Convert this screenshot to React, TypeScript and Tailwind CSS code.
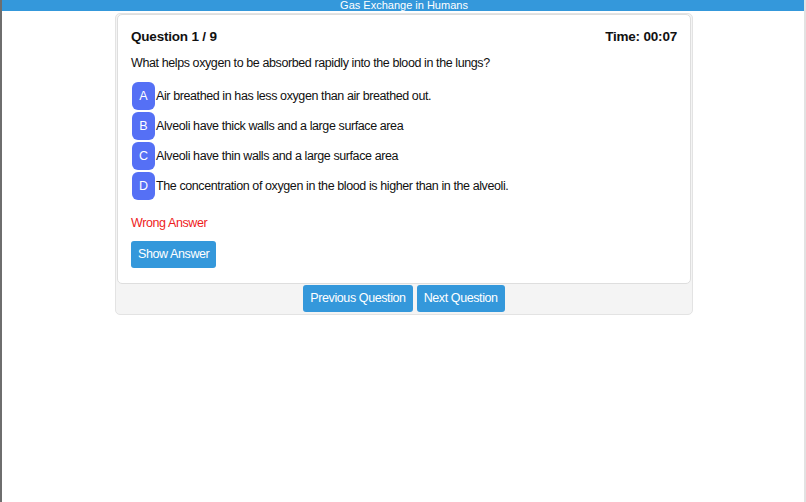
import { useState } from "react"

const options = [
  { key: "A", text: "Air breathed in has less oxygen than air breathed out." },
  { key: "B", text: "Alveoli have thick walls and a large surface area" },
  { key: "C", text: "Alveoli have thin walls and a large surface area" },
  { key: "D", text: "The concentration of oxygen in the blood is higher than in the alveoli." },
]

export default function App() {
  const [picked, setPicked] = useState<string | null>("A")

  return (
    <div
      className="min-h-screen bg-white border-l-2 border-l-[#6e6e6e] border-r-2 border-r-[#e2e2e2] text-[#111]"
      style={{ fontFamily: '"Liberation Sans", Arial, sans-serif' }}
    >
      {/* title bar */}
      <div className="h-[11px] bg-[#3498db] flex justify-center">
        <span className="text-white text-[11px] leading-[10px] pl-[2px]">Gas Exchange in Humans</span>
      </div>

      <div className="ml-[113px] mr-[111px] mt-[2px] bg-[#f4f4f4] border border-[#e3e3e3] rounded-[5px] px-px pb-px">
        {/* question card */}
        <div className="bg-white border border-[#dedede] rounded-[5px] px-[13px] pt-[13px] pb-[15px]">
          <div className="flex justify-between items-center text-[13.5px] tracking-[-0.2px] leading-[18px] font-bold">
            <span>Question 1 / 9</span>
            <span>Time: 00:07</span>
          </div>

          <p className="mt-[9px] text-[12.5px] tracking-[-0.4px] leading-4">
            What helps oxygen to be absorbed rapidly into the blood in the lungs?
          </p>

          <div className="mt-[11px] flex flex-col gap-[2px]">
            {options.map((o) => (
              <div key={o.key} className="flex items-center">
                <button
                  onClick={() => setPicked(o.key)}
                  className="ml-px w-[23px] h-[28px] rounded-[6px] bg-[#5570f5] text-white text-[12.5px] flex items-center justify-center"
                >
                  {o.key}
                </button>
                <span className="ml-px text-[12.5px] tracking-[-0.4px] leading-4">{o.text}</span>
              </div>
            ))}
          </div>

          {picked && (
            <p className="mt-[15px] text-[12.5px] tracking-[-0.4px] leading-4 text-[#ee1c1c]">Wrong Answer</p>
          )}

          <button className="mt-[10px] h-[27px] px-[7px] rounded-[3px] bg-[#3498db] text-white text-[12.5px] tracking-[-0.4px]">
            Show Answer
          </button>
        </div>

        {/* navigation */}
        <div className="flex justify-center gap-1 pt-px pb-px">
          <button className="h-[27px] px-[7px] rounded-[3px] bg-[#3498db] text-white text-[12.5px] tracking-[-0.4px]">
            Previous Question
          </button>
          <button className="h-[27px] px-[7px] rounded-[3px] bg-[#3498db] text-white text-[12.5px] tracking-[-0.4px]">
            Next Question
          </button>
        </div>
      </div>
    </div>
  )
}
